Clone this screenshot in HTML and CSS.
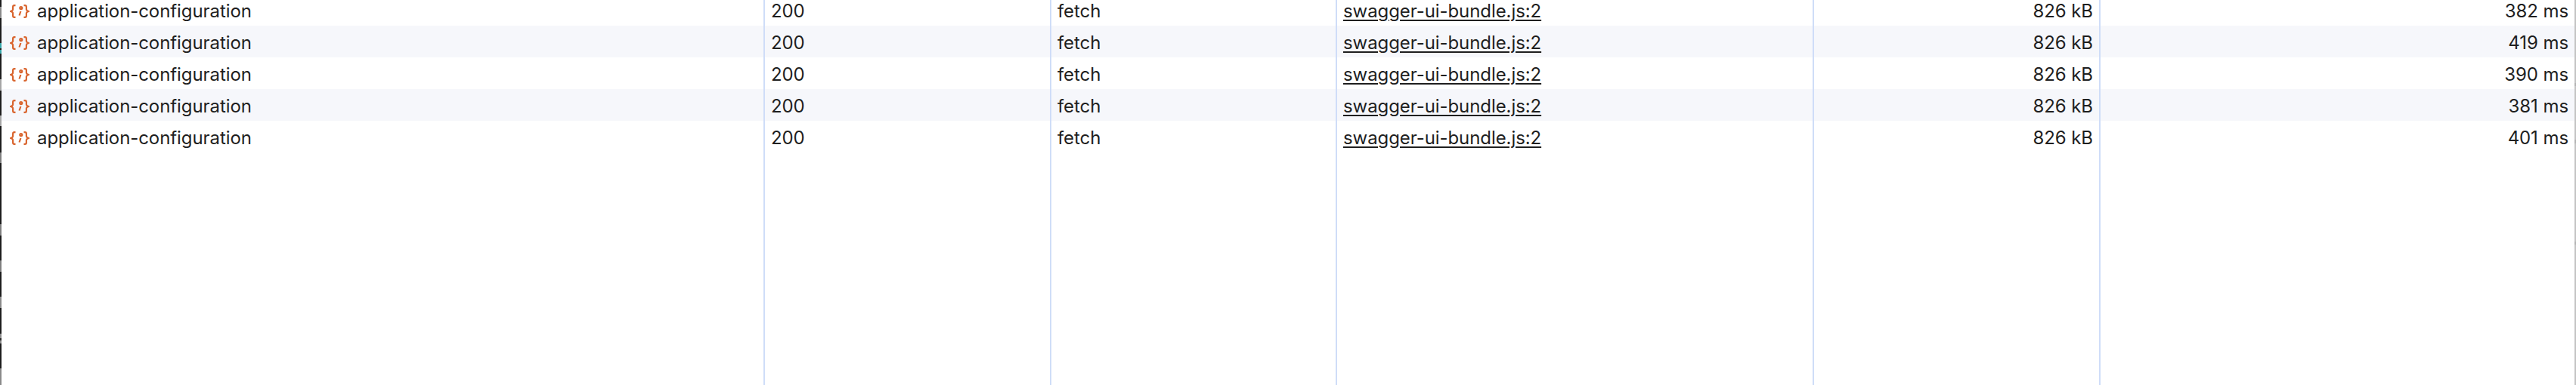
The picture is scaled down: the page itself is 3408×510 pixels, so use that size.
FILE: index.html
```html
<!DOCTYPE html>
<html lang="en">
<head>
<meta charset="utf-8">
<title>Network requests</title>
<link rel="stylesheet" href="styles.css">
</head>
<body>
<svg class="defs" aria-hidden="true"><symbol id="json" viewBox="0 0 26 18"><path d="M7.500 1.100H6C4.600 1.100 4.100 1.900 4.100 3.200V6.300C4.100 7.600 3 8.500 1.100 9C3 9.500 4.100 10.400 4.100 11.700V14.800C4.100 16.100 4.600 16.900 6 16.900H7.500M18.500 1.100H20C21.400 1.100 21.900 1.900 21.900 3.200V6.300C21.900 7.600 23 8.500 24.900 9C23 9.500 21.900 10.400 21.900 11.700V14.800C21.900 16.100 21.400 16.900 20 16.900H18.500M14.400 9L12.500 14.500"/><circle cx="14.800" cy="4.600" r="1.500"/></symbol></svg>
<div class="frame">
  <div class="edge edge-left"></div>
  <div class="grid">
    <div class="lines">
      <div class="line"></div><div class="line"></div><div class="line"></div><div class="line"></div><div class="line"></div><div></div>
    </div>
    <div class="rows">
      <div class="row"><div class="cell name"><svg class="ico"><use href="#json"/></svg><span>application-configuration</span></div><div class="cell">200</div><div class="cell">fetch</div><div class="cell"><u>swagger-ui-bundle.js:2</u></div><div class="cell num">826 kB</div><div class="cell num end">382 ms</div></div>
      <div class="row"><div class="cell name"><svg class="ico"><use href="#json"/></svg><span>application-configuration</span></div><div class="cell">200</div><div class="cell">fetch</div><div class="cell"><u>swagger-ui-bundle.js:2</u></div><div class="cell num">826 kB</div><div class="cell num end">419 ms</div></div>
      <div class="row"><div class="cell name"><svg class="ico"><use href="#json"/></svg><span>application-configuration</span></div><div class="cell">200</div><div class="cell">fetch</div><div class="cell"><u>swagger-ui-bundle.js:2</u></div><div class="cell num">826 kB</div><div class="cell num end">390 ms</div></div>
      <div class="row"><div class="cell name"><svg class="ico"><use href="#json"/></svg><span>application-configuration</span></div><div class="cell">200</div><div class="cell">fetch</div><div class="cell"><u>swagger-ui-bundle.js:2</u></div><div class="cell num">826 kB</div><div class="cell num end">381 ms</div></div>
      <div class="row"><div class="cell name"><svg class="ico"><use href="#json"/></svg><span>application-configuration</span></div><div class="cell">200</div><div class="cell">fetch</div><div class="cell"><u>swagger-ui-bundle.js:2</u></div><div class="cell num">826 kB</div><div class="cell num end">401 ms</div></div>
    </div>
  </div>
  <div class="edge edge-right"></div>
</div>
</body>
</html>
```
FILE: styles.css
```css
html, body { margin: 0; padding: 0; height: 100%; overflow: hidden; background: #fff; }
.defs { display: none; }
.frame { display: flex; height: 510px; width: 3408px; overflow: hidden; }
.edge { width: 2px; flex: none; }
.edge-left {
  background: linear-gradient(to bottom,
    #1c1c1c 0 9px, #8a8a8a 9px 24px, #1c1c1c 24px 57px,
    #35a5a8 57px 64px, #1c1c1c 64px 66px, #35a5a8 66px 71px, #1c1c1c 71px 105px,
    #a6a6a6 105px 120px, #1c1c1c 120px 153px, #a6a6a6 153px 167px, #1c1c1c 167px 202px,
    #7f7f7f 202px 216px, #1c1c1c 216px 297px, #7f7f7f 297px 312px, #1c1c1c 312px 345px,
    #7f7f7f 345px 360px, #1c1c1c 360px 393px, #8a8a8a 393px 408px, #1c1c1c 408px 442px,
    #8a8a8a 442px 448px, #2a2a2a 448px 451px, #8a8a8a 451px 455px, #1c1c1c 455px 488px,
    #8a8a8a 488px 510px);
}
.edge-right {
  background: linear-gradient(to bottom,
    #c4c4c4 0 110px, #b4b4b4 110px 114px, #c4c4c4 114px 185px, #b4b4b4 185px 190px,
    #c4c4c4 190px 320px, #b4b4b4 320px 324px, #c4c4c4 324px 510px);
}
.grid { flex: 1; position: relative; }
.lines, .row { display: grid; grid-template-columns: 1010px 379px 378px 631px 379px 627px; }
.lines { position: absolute; inset: 0; pointer-events: none; z-index: 1; }
.line { border-right: 2px solid #cfddf8; }
.row { height: 42px; box-sizing: border-box; padding-top: 3px; align-items: center; font: 24px/36px Inter, "Liberation Sans", sans-serif; letter-spacing: -0.08px; color: #1f1f1f; }
.row:first-child { height: 34px; padding-top: 0; align-items: start; }
.row:first-child .cell { line-height: 29px; }
.row:nth-child(even) { background: #f6f7fb; }
.cell { padding: 0 8px; white-space: nowrap; }
.name { display: flex; align-items: center; gap: 10px; padding-left: 11px; }
.num { text-align: right; padding-right: 10px; }
.end { padding-right: 8px; }
.ico { width: 26px; height: 18px; flex: none; fill: none; stroke: #d9652f; stroke-width: 2.2; }
.ico circle { fill: #d9652f; stroke: none; }
u { text-underline-offset: 3px; text-decoration-thickness: 2px; }
```
